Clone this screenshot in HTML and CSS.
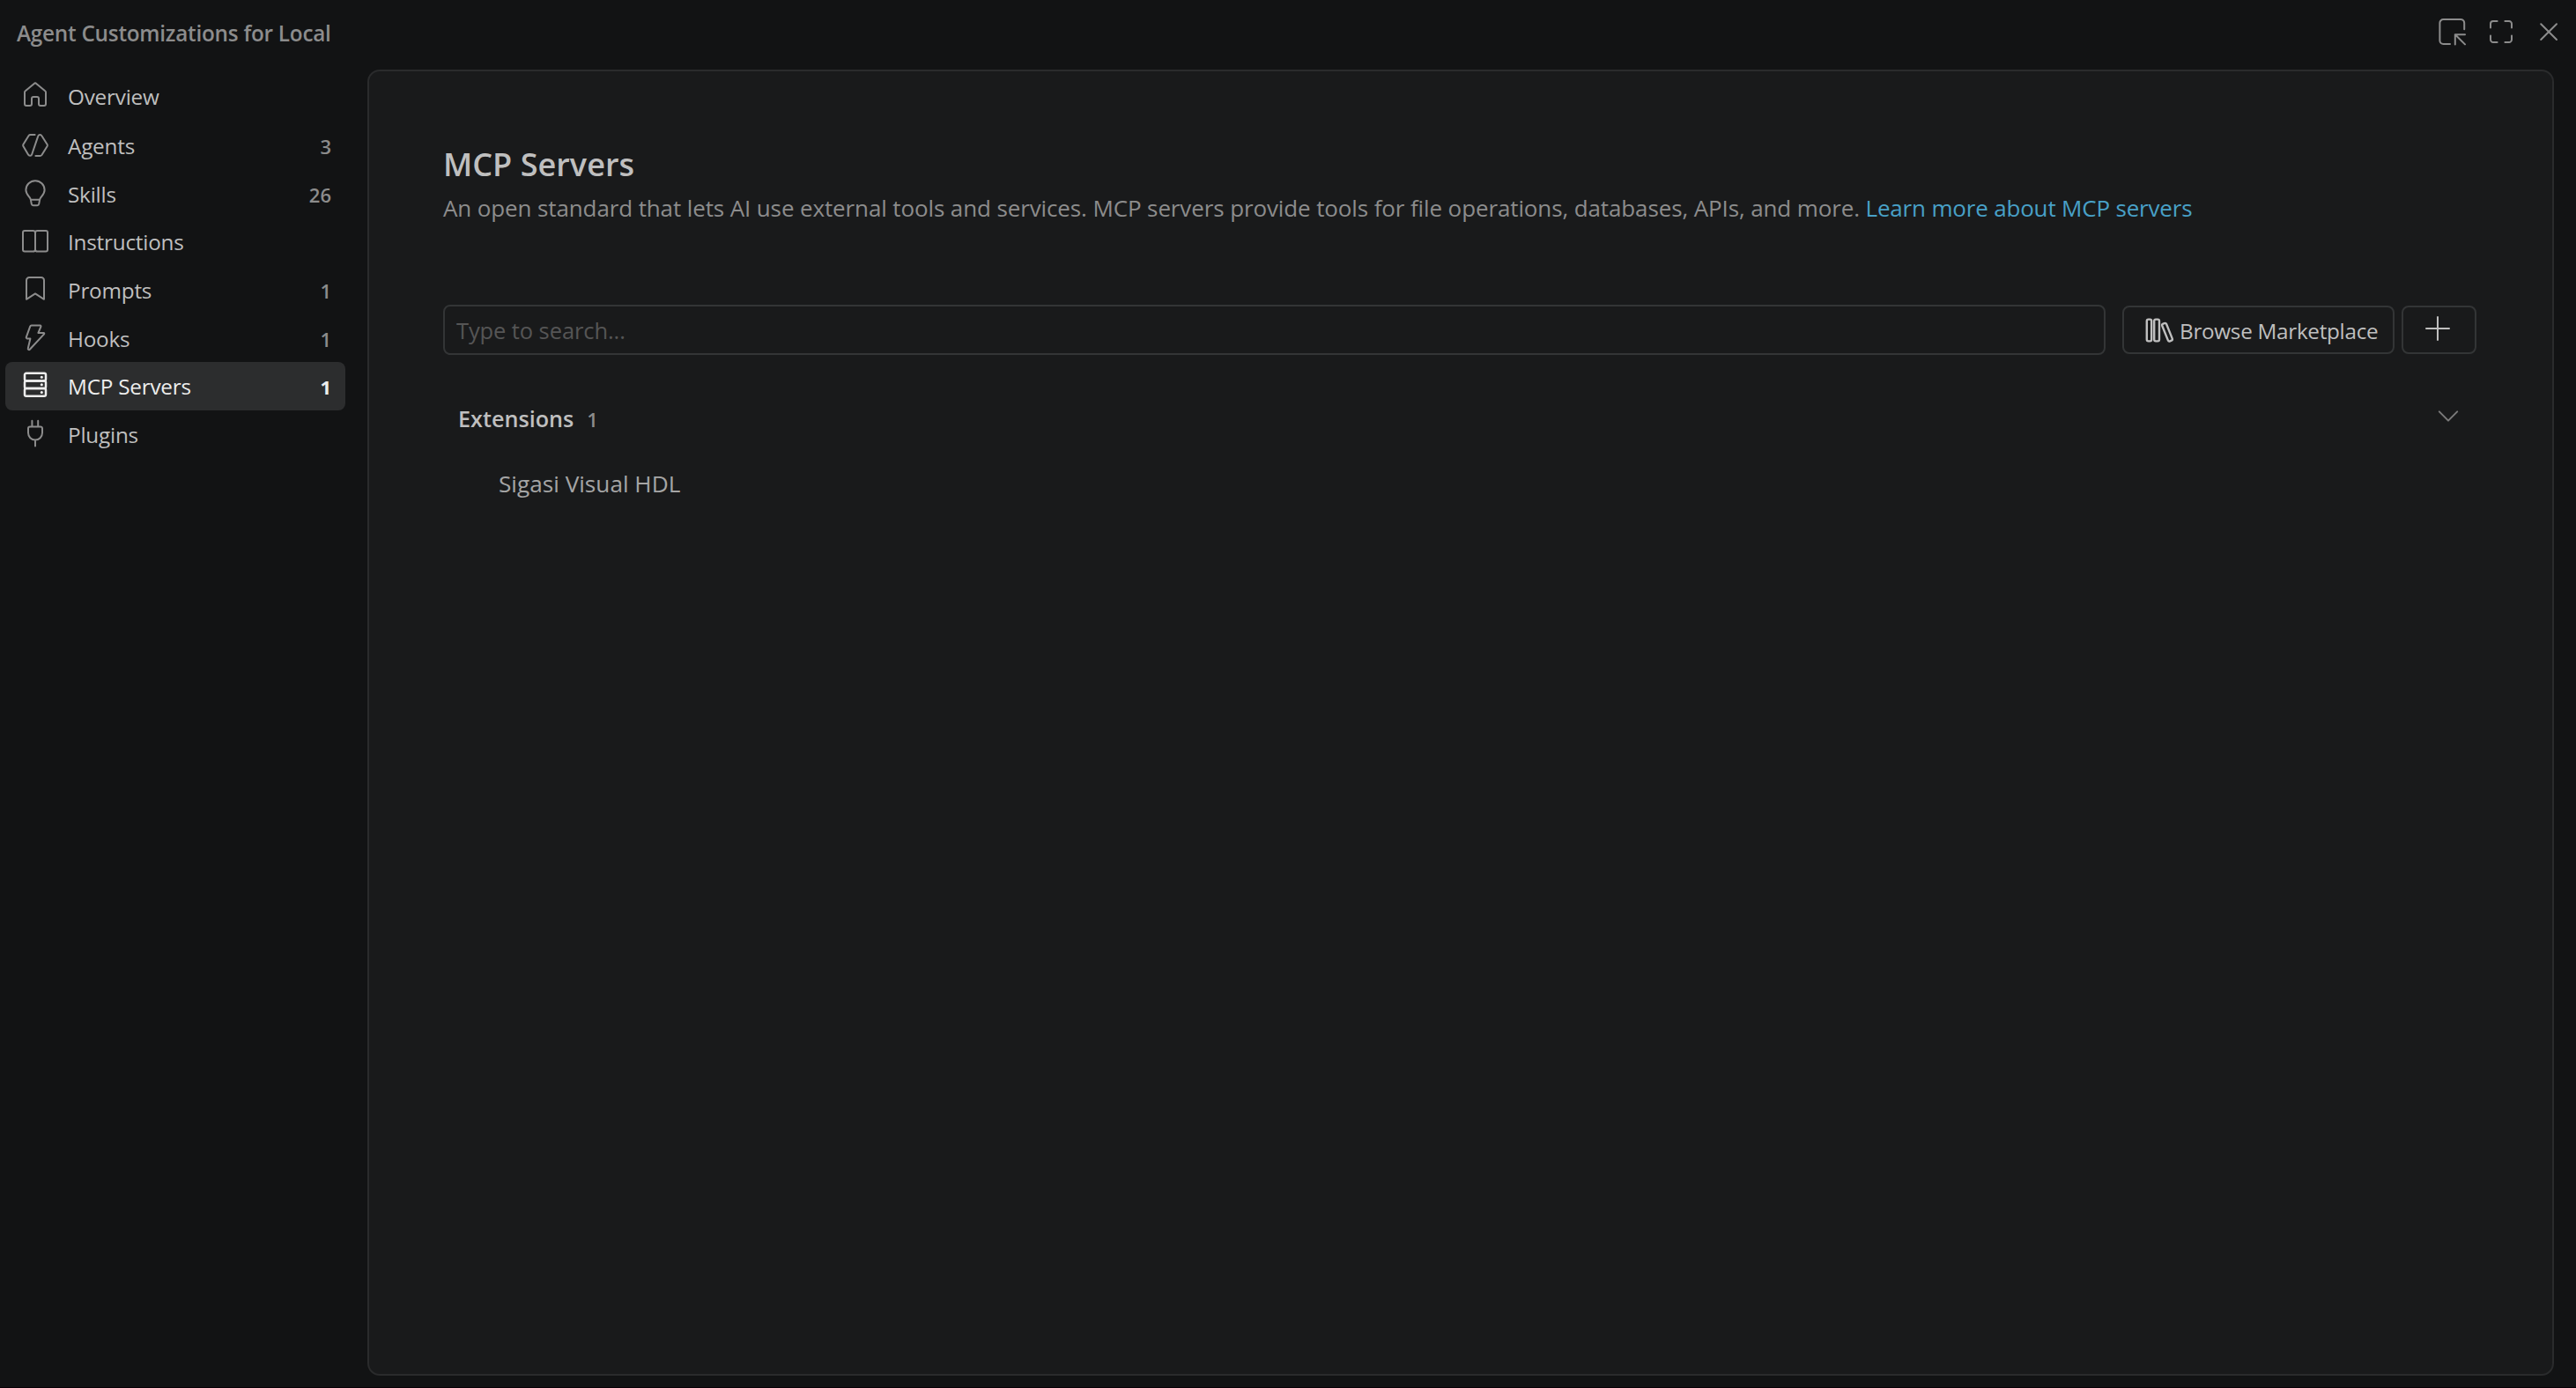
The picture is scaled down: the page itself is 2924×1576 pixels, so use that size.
FILE: index.html
```
<!DOCTYPE html>
<html lang="en">
<head>
    <meta charset="utf-8">
    <title>Agent Customizations for Local</title>
    <link rel="stylesheet" href="styles.css">
</head>
<body>
    <header class="titlebar">
        <h1 class="title">Agent Customizations for Local</h1>
        <div class="actions">
            <svg class="icon" viewBox="0 0 16 16"><path d="M14.6 6.6V3a2 2 0 0 0-2-2H2.7a2 2 0 0 0-2 2v10a2 2 0 0 0 2 2h3.8M15 9.6H9.4v5.6M9.4 9.6l5.6 5.6"/></svg>
            <svg class="icon" viewBox="0 0 16 16"><path d="M5.8 2H3.5A1.5 1.5 0 0 0 2 3.5v2.3M10.2 2h2.3A1.5 1.5 0 0 1 14 3.5v2.3M14 10.2v2.3a1.5 1.5 0 0 1-1.5 1.5h-2.3M5.8 14H3.5A1.5 1.5 0 0 1 2 12.5v-2.3"/></svg>
            <svg class="icon" viewBox="0 0 16 16"><path d="M3.6 3.6l8.9 8.9M12.5 3.6l-8.9 8.9"/></svg>
        </div>
    </header>
    <div class="layout">
        <nav class="sidebar">
            <a class="item overview">
                <svg class="icon" viewBox="0 0 16 16"><path d="M2 5.9v6.6a1 1 0 0 0 1 1h2a1 1 0 0 0 1-1v-3a1 1 0 0 1 1-1h2a1 1 0 0 1 1 1v3a1 1 0 0 0 1 1h2a1 1 0 0 0 1-1V5.9a1 1 0 0 0-.4-.8L8.3.7a.5.5 0 0 0-.6 0L2.4 5.1a1 1 0 0 0-.4.8z"/></svg>
                <span class="label">Overview</span>
            </a>
            <a class="item">
                <svg class="icon" viewBox="0 0 16 16"><path d="M7.8 2H5.3a1.2 1.2 0 0 0-1 .5L1.2 7.5a1 1 0 0 0 0 1L4 13.3c.5.9 1.8.8 2.1-.2L9.6 2.8c.3-1 1.6-1.1 2.1-.2l3.1 4.9a1 1 0 0 1 0 1l-3.1 5a1.2 1.2 0 0 1-1 .5H8.2"/></svg>
                <span class="label">Agents</span>
                <span class="count">3</span>
            </a>
            <a class="item">
                <svg class="icon" viewBox="0 0 16 16"><path d="M8 .6a5.3 5.3 0 0 0-5.3 5.3C2.7 8 4.4 9.4 4.9 10.2c.4.5.5 1 .6 1.5l.4 2.1a1 1 0 0 0 1 .8h2.2a1 1 0 0 0 1-.8l.4-2.1c.1-.5.2-1 .6-1.5.5-.8 2.2-2.2 2.2-4.3A5.3 5.3 0 0 0 8 .6zM5.5 11.4h5"/></svg>
                <span class="label">Skills</span>
                <span class="count">26</span>
            </a>
            <a class="item">
                <svg class="icon" viewBox="0 0 16 16"><path d="M8 3.1A1.2 1.2 0 0 0 6.8 2H2a1 1 0 0 0-1 1v9.8a1 1 0 0 0 1 1h4.8A1.2 1.2 0 0 0 8 12.7a1.2 1.2 0 0 0 1.2 1.1H14a1 1 0 0 0 1-1V3a1 1 0 0 0-1-1H9.2A1.2 1.2 0 0 0 8 3.1zv9.6"/></svg>
                <span class="label">Instructions</span>
            </a>
            <a class="item">
                <svg class="icon" viewBox="0 0 16 16"><path d="M3 13.4V2.6A1.6 1.6 0 0 1 4.6 1h6.8A1.6 1.6 0 0 1 13 2.6v10.8l-5-3.2z"/></svg>
                <span class="label">Prompts</span>
                <span class="count">1</span>
            </a>
            <a class="item">
                <svg class="icon" viewBox="0 0 16 16"><path d="M5.9.7h4.9a.5.5 0 0 1 .4.7L9.7 5h3a.4.4 0 0 1 .3.7l-8.1 8.7a.6.6 0 0 1-1-.6l1.3-5.6H3.4a.6.6 0 0 1-.5-.8l2.2-6.1a.9.9 0 0 1 .8-.6z"/></svg>
                <span class="label">Hooks</span>
                <span class="count">1</span>
            </a>
            <a class="item selected">
                <svg class="icon" viewBox="0 0 16 16"><rect x="2" y=".9" width="12" height="4.3" rx=".9"/><rect x="2" y="5.2" width="12" height="4.3" rx=".9"/><rect x="2" y="9.5" width="12" height="4.4" rx=".9"/><path class="dots" d="M11.6 3.1h.1M11.6 7.4h.1M11.6 11.7h.1"/></svg>
                <span class="label">MCP Servers</span>
                <span class="count">1</span>
            </a>
            <a class="item">
                <svg class="icon" viewBox="0 0 16 16"><path d="M6.2.4v3.3M9.6.4v3.3M5 3.7h6a1 1 0 0 1 1 1v2.6a4 4 0 0 1-8 0V4.7a1 1 0 0 1 1-1zM8 11.3v3.5"/></svg>
                <span class="label">Plugins</span>
            </a>
        </nav>
        <main class="panel">
            <h2 class="heading">MCP Servers</h2>
            <p class="description">An open standard that lets AI use external tools and services. MCP servers provide tools for file operations, databases, APIs, and more. <a class="link">Learn more about MCP servers</a></p>
            <div class="toolbar">
                <div class="search">Type to search...</div>
                <button class="button browse">
                    <svg class="icon" viewBox="0 0 16 16"><rect x=".9" y="1.8" width="2.7" height="12.4" rx=".9"/><rect x="5.1" y="1.8" width="2.9" height="12.4" rx=".9"/><rect x="11.2" y="3.8" width="2.6" height="10.6" rx=".9" transform="rotate(-22 12.5 9.1)"/></svg>
                    <span>Browse Marketplace</span>
                </button>
                <button class="button add">
                    <svg class="icon" viewBox="0 0 16 16"><path d="M8 1.5v13M1.5 8h13"/></svg>
                </button>
            </div>
            <div class="group">
                <span class="group-name">Extensions</span>
                <span class="group-count">1</span>
                <svg class="icon chevron" viewBox="0 0 16 16"><path d="M2.9 5.7L8 10.8l5.1-5.1"/></svg>
            </div>
            <div class="server">Sigasi Visual HDL</div>
        </main>
    </div>
</body>
</html>
```
FILE: styles.css
```
* { box-sizing: border-box; }
body { margin: 0; height: 1576px; display: flex; flex-direction: column; background: #121314; border-bottom: 1px solid #080006; color: #bfbfbf; font-family: "Open Sans", sans-serif; font-size: 26px; overflow: hidden; }
h1, h2, p { margin: 0; }
.icon { width: 32px; height: 32px; flex: none; fill: none; stroke: currentColor; stroke-width: 1; stroke-linecap: round; stroke-linejoin: round; overflow: visible; }

.titlebar { height: 79px; flex: none; display: flex; justify-content: space-between; padding: 20px 15px 0 19px; }
.title { font-size: 24.3px; letter-spacing: -0.24px; line-height: 35px; font-weight: 600; color: #8c8c8c; }
.actions { display: flex; gap: 22.5px; color: #8c8c8c; }

.layout { flex: 1; display: flex; min-height: 0; padding-bottom: 13px; }
.sidebar { width: 417px; flex: none; padding: 2.67px 25px 0 6px; }
.item { display: flex; align-items: center; height: 54.67px; padding: 0 16px 0 18px; border-radius: 8px; font-size: 24.3px; letter-spacing: -0.22px; }
.item .icon { color: #8c8c8c; margin-right: 21px; }
.label { flex: 1; padding-top: 1px; }
.count { padding-top: 2px; font-size: 22px; font-weight: 600; letter-spacing: 0; color: #8c8c8c; }
.overview { margin-bottom: 1.33px; }
.selected { background: #2c2d2e; color: #ededed; }
.selected .icon, .selected .count { color: #ededed; }
.selected .icon { stroke-width: 1.25; }
.selected .count { font-weight: 700; }
.dots { stroke-width: 1.5; }

.panel { flex: none; width: 2482px; padding: 81px 86px 0 84px; background: #191a1b; border: 2px solid #2a2b2c; border-radius: 14px; }
.heading { font-size: 36.1px; line-height: 48px; font-weight: 600; }
.description { margin-top: 7px; line-height: 39px; letter-spacing: -0.12px; color: #8c8c8c; }
.link { color: #48a0c7; letter-spacing: -0.18px; }
.toolbar { display: flex; align-items: center; margin-top: 90px; }
.search { flex: 1; height: 57px; padding: 1px 13px 0; border: 2px solid #333536; border-radius: 8px; line-height: 53px; font-size: 25.5px; letter-spacing: -0.1px; color: #555; }
.button { height: 55px; display: flex; align-items: center; padding: 0; background: none; border: 2px solid #333536; border-radius: 8px; color: #bfbfbf; font: inherit; }
.browse { width: 309px; margin-left: 19px; padding: 1px 0 0 24px; font-size: 24.3px; letter-spacing: -0.3px; }
.browse .icon { margin: 0 7px 1px 0; stroke-width: 1.2; }
.add { width: 85px; margin-left: 8px; justify-content: center; }
.add .icon { margin: 0 3px 4px 0; }
.group { display: flex; align-items: center; height: 44px; margin-top: 49px; padding: 0 16px 0 17px; }
.group-name { padding-top: 1px; font-size: 25.2px; font-weight: 600; }
.group-count { margin-left: 15px; padding-top: 3px; font-size: 22px; font-weight: 600; color: #8c8c8c; }
.chevron { margin: 0 0 5px auto; color: #7a7a7a; }
.server { margin-top: 26px; padding: 1px 0 0 63px; line-height: 52px; font-size: 26.2px; color: #a5a5a5; }
```
